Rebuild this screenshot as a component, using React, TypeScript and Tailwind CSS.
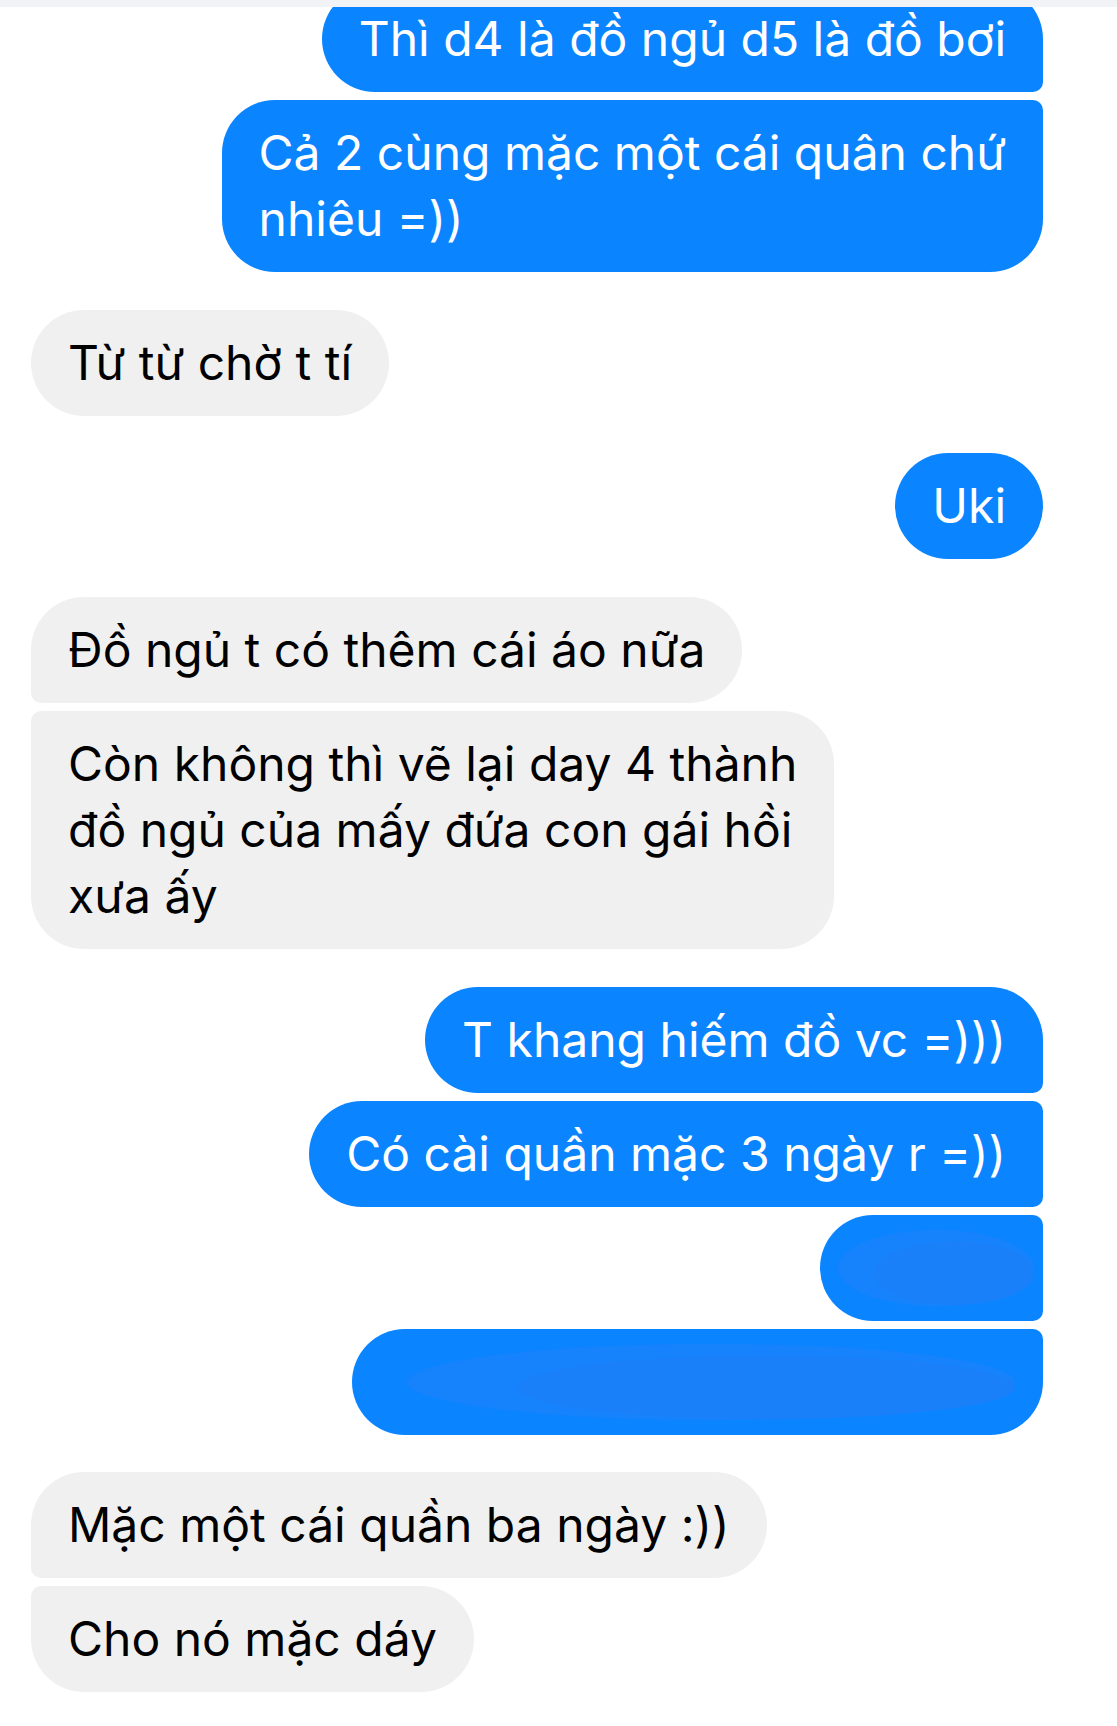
import React from "react";

type Bubble = {
  id: string;
  side: "me" | "them";
  lines: string[];
  shape: string;
  gap: string;
  scribble?: boolean;
  blankWidth?: string;
};

const msgs: Bubble[] = [
  { id: "m1", side: "me", lines: ["Thì d4 là đồ ngủ d5 là đồ bơi"], shape: "rounded-l-[53px] rounded-tr-[53px] rounded-br-[10px]", gap: "-mt-[14px]" },
  { id: "m2", side: "me", lines: ["Cả 2 cùng mặc một cái quân chứ", "nhiêu =))"], shape: "rounded-l-[53px] rounded-tr-[10px] rounded-br-[53px]", gap: "mt-[8px]" },
  { id: "m3", side: "them", lines: ["Từ từ chờ t tí"], shape: "rounded-[53px]", gap: "mt-[38px]" },
  { id: "m4", side: "me", lines: ["Uki"], shape: "rounded-[53px]", gap: "mt-[37px]" },
  { id: "m5", side: "them", lines: ["Đồ ngủ t có thêm cái áo nữa"], shape: "rounded-r-[53px] rounded-tl-[53px] rounded-bl-[10px]", gap: "mt-[38px]" },
  { id: "m6", side: "them", lines: ["Còn không thì vẽ lại day 4 thành", "đồ ngủ của mấy đứa con gái hồi", "xưa ấy"], shape: "rounded-r-[53px] rounded-tl-[10px] rounded-bl-[53px]", gap: "mt-[8px]" },
  { id: "m7", side: "me", lines: ["T khang hiếm đồ vc =)))"], shape: "rounded-l-[53px] rounded-tr-[53px] rounded-br-[10px]", gap: "mt-[38px]" },
  { id: "m8", side: "me", lines: ["Có cài quần mặc 3 ngày r =))"], shape: "rounded-l-[53px] rounded-r-[10px]", gap: "mt-[8px]" },
  { id: "m9", side: "me", lines: [], shape: "rounded-l-[53px] rounded-r-[10px]", gap: "mt-[8px]", scribble: true, blankWidth: "w-[223px]" },
  { id: "m10", side: "me", lines: [], shape: "rounded-l-[53px] rounded-tr-[10px] rounded-br-[53px]", gap: "mt-[8px]", scribble: true, blankWidth: "w-[691px]" },
  { id: "m11", side: "them", lines: ["Mặc một cái quần ba ngày :))"], shape: "rounded-r-[53px] rounded-tl-[53px] rounded-bl-[10px]", gap: "mt-[37px]" },
  { id: "m12", side: "them", lines: ["Cho nó mặc dáy"], shape: "rounded-r-[53px] rounded-tl-[10px] rounded-bl-[53px]", gap: "mt-[8px]" },
];

function Row({ m }: { m: Bubble }) {
  const me = m.side === "me";
  return (
    <div className={`flex ${me ? "justify-end" : "justify-start"} ${m.gap}`}>
      <div
        className={`relative overflow-hidden px-[37px] py-[20px] text-[48px] leading-[66px] whitespace-nowrap ${m.shape} ${
          me ? "bg-[#0a84ff] text-white" : "bg-[#f0f0f0] text-black"
        } ${m.blankWidth ?? ""}`}
      >
        {m.scribble ? (
          <>
            <div className="h-[66px]" />
            {/* marker scribble over the hidden text */}
            <svg className="absolute inset-0 h-full w-full" viewBox="0 0 100 100" preserveAspectRatio="none">
              <ellipse cx="52" cy="50" rx="44" ry="36" fill="#1682fb" />
              <ellipse cx="60" cy="55" rx="36" ry="30" fill="#1a80fa" />
            </svg>
          </>
        ) : (
          m.lines.map((l, i) => <div key={i}>{l}</div>)
        )}
      </div>
    </div>
  );
}

export default function App() {
  return (
    <div
      className="relative h-[1726px] w-[1117px] overflow-hidden bg-white pl-[31px] pr-[74px]"
      style={{ fontFamily: "Inter, 'Noto Sans', sans-serif" }}
    >
      {/* top edge of the screenshot */}
      <div className="absolute inset-x-0 top-0 z-10 h-[7px] bg-[#f1f3f7]" />
      {msgs.map((m) => (
        <Row key={m.id} m={m} />
      ))}
    </div>
  );
}
